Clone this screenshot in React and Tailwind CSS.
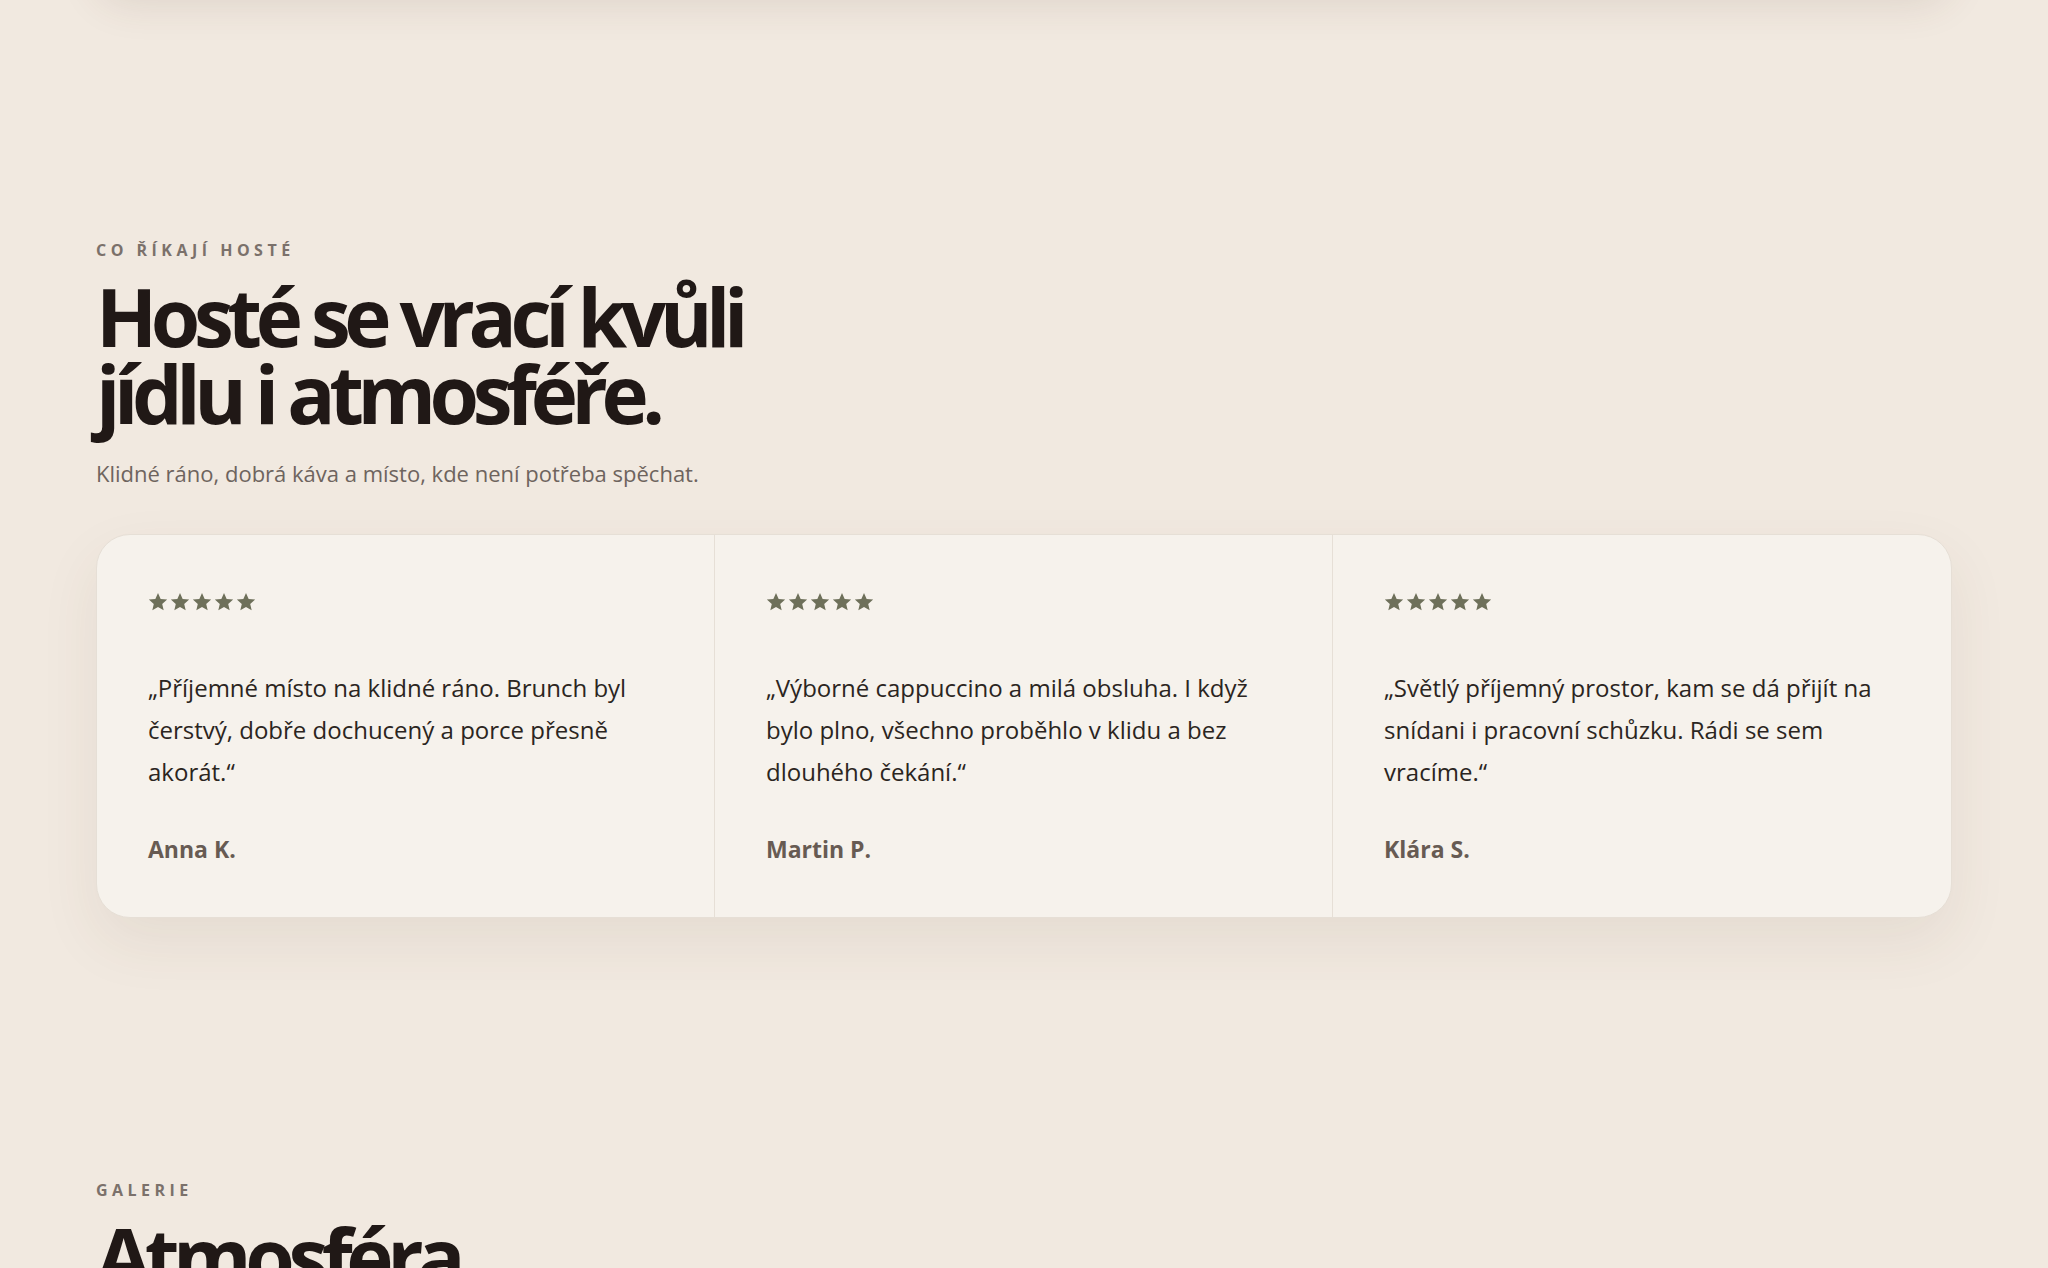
import React from "react";

const REVIEWS = [
  {
    text: "„Příjemné místo na klidné ráno. Brunch byl čerstvý, dobře dochucený a porce přesně akorát.“",
    author: "Anna K.",
  },
  {
    text: "„Výborné cappuccino a milá obsluha. I když bylo plno, všechno proběhlo v klidu a bez dlouhého čekání.“",
    author: "Martin P.",
  },
  {
    text: "„Světlý příjemný prostor, kam se dá přijít na snídani i pracovní schůzku. Rádi se sem vracíme.“",
    author: "Klára S.",
  },
];

function Star() {
  return (
    <svg viewBox="0 0 24 24" className="h-[22px] w-[22px]" fill="#6e705a">
      <path d="M12 2.2l2.9 6.6 7.1.6-5.4 4.7 1.6 7-6.2-3.7-6.2 3.7 1.6-7L2 9.4l7.1-.6z" />
    </svg>
  );
}

function Stars() {
  return (
    <div className="-ml-[1px] flex items-center gap-0" aria-label="5 z 5">
      {[0, 1, 2, 3, 4].map((i) => (
        <Star key={i} />
      ))}
    </div>
  );
}

function ReviewCard({ review }) {
  return (
    <article className="flex flex-col px-[51px] pt-[56px] pb-[52px]">
      <Stars />
      <p className="mt-[54px] text-[24px] leading-[42px] text-[#2b2521]">{review.text}</p>
      <p className="mt-[40px] text-[23px] font-bold leading-[32px] text-[#675b53]">{review.author}</p>
    </article>
  );
}

function SectionHeading({ eyebrow, children }) {
  return (
    <>
      <p className="text-[16px] font-bold uppercase leading-[20px] tracking-[0.28em] text-[#7b716b]">
        {eyebrow}
      </p>
      <h2 className="mt-[17px] text-[80px] font-bold leading-[77px] tracking-[-0.08em] text-[#201816]">
        {children}
      </h2>
    </>
  );
}

export default function App() {
  return (
    <div className="min-h-screen overflow-hidden bg-[#f1e9e0] font-['Open_Sans',sans-serif]">
      <div className="mx-auto w-full max-w-[1860px] px-[2px]">
        {/* bottom edge of the previous block */}
        <div className="-mt-[120px] h-[110px] rounded-[32px] bg-[#f1e9e0] shadow-[0_14px_40px_rgba(90,60,40,0.12)]" />
      </div>

      <section className="pt-[250px] pb-[130px]">
        <div className="mx-auto w-full max-w-[1860px] px-[2px]">
          <SectionHeading eyebrow="Co říkají hosté">
            Hosté se vrací kvůli
            <br />
            jídlu i atmosféře.
          </SectionHeading>
          <p className="mt-[26px] text-[22px] leading-[32px] text-[#6e645e]">
            Klidné ráno, dobrá káva a místo, kde není potřeba spěchat.
          </p>

          <div className="mt-[45px] grid grid-cols-3 divide-x divide-[#e6dfd6] overflow-hidden rounded-[34px] border border-[#e6dfd6] bg-[#f6f2ec] shadow-[0_24px_60px_rgba(90,60,40,0.08)]">
            {REVIEWS.map((review) => (
              <ReviewCard key={review.author} review={review} />
            ))}
          </div>
        </div>
      </section>

      <section className="pt-[132px] pb-[120px]">
        <div className="mx-auto w-full max-w-[1860px] px-[2px]">
          <SectionHeading eyebrow="Galerie">Atmosféra</SectionHeading>
        </div>
      </section>
    </div>
  );
}
